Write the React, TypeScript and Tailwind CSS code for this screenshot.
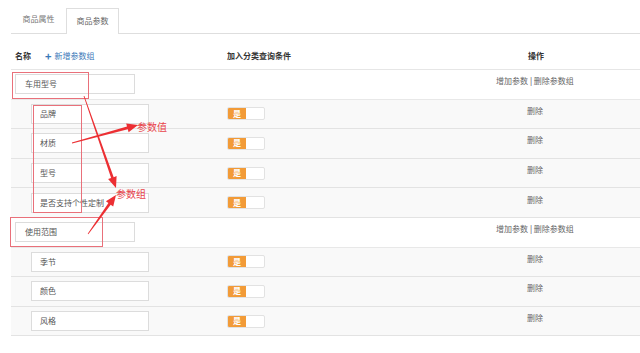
import React from "react";

type Row = { kind: "group" | "param"; name: string };

const rows: Row[] = [
  { kind: "group", name: "车用型号" },
  { kind: "param", name: "品牌" },
  { kind: "param", name: "材质" },
  { kind: "param", name: "型号" },
  { kind: "param", name: "是否支持个性定制" },
  { kind: "group", name: "使用范围" },
  { kind: "param", name: "季节" },
  { kind: "param", name: "颜色" },
  { kind: "param", name: "风格" },
];

const font = { fontFamily: '"Noto Sans CJK SC", "Noto Sans", sans-serif' };

// tapered annotation arrow, like the ones from a screenshot tool
const arrowPoints = (sx: number, sy: number, tx: number, ty: number) => {
  const dx = tx - sx;
  const dy = ty - sy;
  const len = Math.hypot(dx, dy);
  const ux = dx / len;
  const uy = dy / len;
  const px = -uy;
  const py = ux;
  const bx = tx - ux * 11;
  const by = ty - uy * 11;
  const pt = (x: number, y: number) => `${x.toFixed(1)},${y.toFixed(1)}`;
  return [
    pt(sx + px * 0.4, sy + py * 0.4),
    pt(bx + px * 1.4, by + py * 1.4),
    pt(bx + px * 4.5, by + py * 4.5),
    pt(tx, ty),
    pt(bx - px * 4.5, by - py * 4.5),
    pt(bx - px * 1.4, by - py * 1.4),
    pt(sx - px * 0.4, sy - py * 0.4),
  ].join(" ");
};

const Toggle = () => (
  <div className="flex h-[13px] w-[38px] rounded-[2px] overflow-hidden border border-[#e2e2e2] bg-white">
    <div className="w-[18px] h-full bg-[#f29b38] flex items-center justify-center text-white text-[8px] font-bold leading-none">
      是
    </div>
  </div>
);

export default function App() {
  return (
    <div className="relative w-[640px] h-[353px] bg-white overflow-hidden text-[#555]" style={font}>
      {/* tabs */}
      <div className="flex items-end h-[34px] ml-[11px] border-b border-[#dedede] text-[8px]">
        <div className="h-[26px] w-[55px] flex items-center justify-center text-[#777] mb-[1px]">商品属性</div>
        <div className="h-[26px] w-[53px] flex items-center justify-center text-[#666] bg-white border border-b-0 border-[#dedede] -mb-[1px] pb-[1px]">
          商品参数
        </div>
      </div>

      {/* table */}
      <div className="ml-[11px] mt-[9px]">
        <div className="grid grid-cols-[209px_210px_1fr] h-[27px] items-center border-b border-[#e6e6e6] text-[8px] font-bold text-[#333]">
          <div className="pl-[4px] flex items-center gap-[14px]">
            <span>名称</span>
            <span className="text-[#3a78b8] font-normal flex items-center gap-[3px]">
              <span className="text-[11px] font-bold leading-none">+</span>新增参数组
            </span>
          </div>
          <div className="pl-[7px]">加入分类查询条件</div>
          <div className="text-center pl-[2px]">操作</div>
        </div>

        {rows.map((r, i) => (
          <div
            key={i}
            className={
              "grid grid-cols-[209px_210px_1fr] h-[29.6px] items-center border-b text-[8px] " +
              (r.kind === "group" ? "bg-white border-[#e8e8e8]" : "bg-[#f9f9f9] border-[#e3e3e3]")
            }
          >
            {r.kind === "group" ? (
              <div className="pl-[4px]">
                <div className="w-[120px] h-[20px] border border-[#dcdcdc] bg-white flex items-center pl-[9px] text-[#555]">
                  {r.name}
                </div>
              </div>
            ) : (
              <div className="pl-[20px]">
                <div className="w-[118px] h-[20px] border border-[#dcdcdc] bg-white flex items-center pl-[8px] text-[#555]">
                  {r.name}
                </div>
              </div>
            )}
            <div className="pl-[7px]">{r.kind === "param" && <Toggle />}</div>
            <div className="text-center text-[#666] -mt-[6px]">
              {r.kind === "group" ? (
                <span>
                  增加参数 <span className="text-[#444]">|</span> 删除参数组
                </span>
              ) : (
                <span>删除</span>
              )}
            </div>
          </div>
        ))}
      </div>

      {/* annotations drawn over the table */}
      <div className="absolute left-[12px] top-[72px] w-[77px] h-[27px] border border-[#e9707a]" />
      <div className="absolute left-[33px] top-[105px] w-[49px] h-[108px] border border-[#e9707a]" />
      <div className="absolute left-[10px] top-[217px] w-[93px] h-[30px] border border-[#e9707a]" />
      <svg className="absolute inset-0 pointer-events-none" width={640} height={353}>
        <polygon points={arrowPoints(84, 96, 116, 188)} fill="#ec2f33" />
        <polygon points={arrowPoints(72, 143, 138, 125)} fill="#ec2f33" />
        <polygon points={arrowPoints(88, 234, 116, 195)} fill="#ec2f33" />
      </svg>
      <span className="absolute left-[137px] top-[120px] text-[10px] leading-[14px] text-[#e8434a]">参数值</span>
      <span className="absolute left-[116px] top-[187px] text-[10px] leading-[14px] text-[#e8434a]">参数组</span>
    </div>
  );
}
